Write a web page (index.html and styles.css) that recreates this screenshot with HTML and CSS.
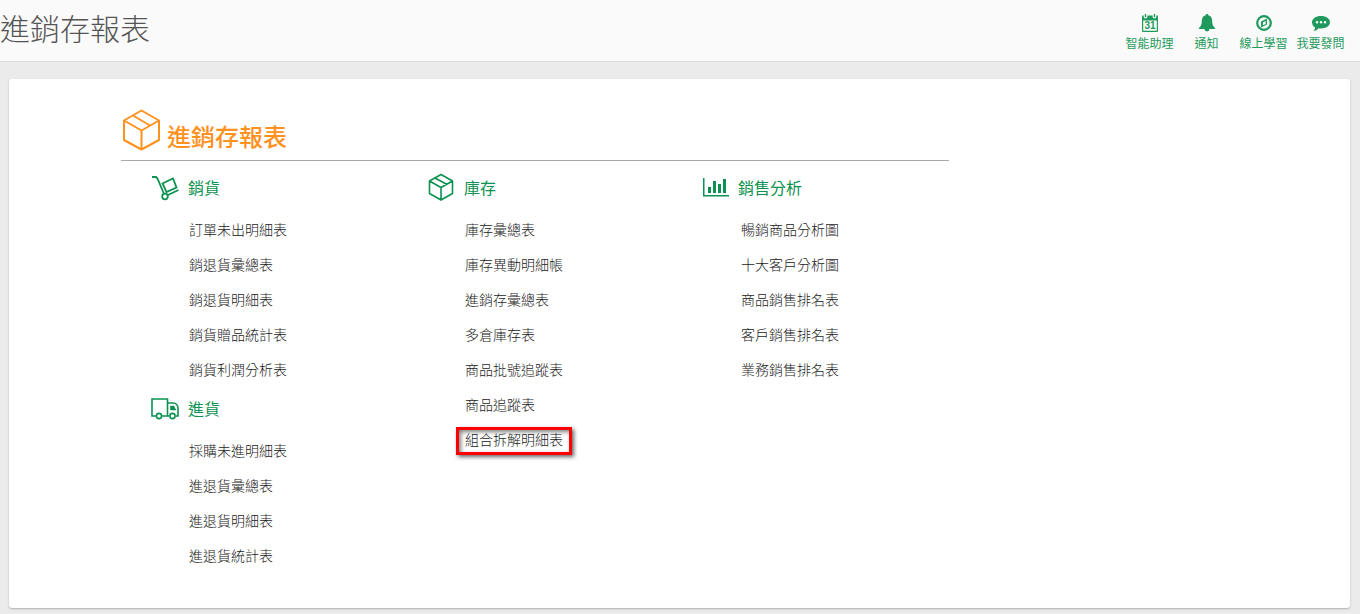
FILE: index.html
```html
<!DOCTYPE html>
<html lang="zh-Hant">
<head>
  <meta charset="UTF-8" />
  <title>進銷存報表</title>
  <meta name="viewport" content="width=device-width, initial-scale=1" />
  <link rel="stylesheet" href="styles.css">
</head>
<body>
  <header class="topbar">
    <h1>進銷存報表</h1>
    <nav class="tools">
      <a href="#">
        <svg width="18" height="20" viewBox="0 0 18 20">
          <path fill="currentColor" fill-rule="evenodd" d="M1 2.500h1.600v1a1.900 1.900 0 0 0 3.800 0v-1h5.200v1a1.900 1.900 0 0 0 3.800 0v-1H17v15.500a1 1 0 0 1-1 1H2a1 1 0 0 1-1-1zM2.200 7.500v10.300h13.600V7.500z"/>
          <path fill="currentColor" d="M3.800 1h1.400v3.200H3.800zM12.800 1h1.400v3.200h-1.400z"/>
          <text class="cal-day" x="9" y="16.300" text-anchor="middle">31</text>
        </svg>
        <span>智能助理</span>
      </a>
      <a href="#">
        <svg width="18" height="20" viewBox="0 0 18 20">
          <path fill="currentColor" d="M9 1c.8 0 1.300.5 1.300 1.200C13 3 14.200 5 14.200 8c0 3.600.9 5.400 3 7.200V16H.8v-.8c2.100-1.800 3-3.600 3-7.200 0-3 1.200-5 3.900-5.800C7.700 1.500 8.200 1 9 1zM6.500 16h5a2.500 2.500 0 0 1-5 0z"/>
        </svg>
        <span>通知</span>
      </a>
      <a href="#">
        <svg width="18" height="20" viewBox="0 0 18 20">
          <circle cx="9" cy="10" r="6.800" fill="none" stroke="currentColor" stroke-width="2.200"/>
          <path fill="currentColor" fill-rule="evenodd" d="M12 5.500v6L6 14.500v-6zM10.700 7.900 8 9.300v3l2.700-1.400z"/>
        </svg>
        <span>線上學習</span>
      </a>
      <a href="#">
        <svg width="18" height="20" viewBox="0 0 18 20">
          <path fill="currentColor" fill-rule="evenodd" d="M9 3c5 0 9 2.700 9 6.200s-4 6.200-9 6.200c-.8 0-1.500 0-2.200-.2C5.300 16.700 3.500 17.800 1.500 18c1-1 1.600-2.200 1.600-3.500C1.200 13.300 0 11.400 0 9.200 0 5.700 4 3 9 3zM5 8a1.300 1.300 0 1 0 0 2.600A1.300 1.300 0 0 0 5 8zm4 0a1.300 1.300 0 1 0 0 2.600A1.300 1.300 0 0 0 9 8zm4 0a1.300 1.300 0 1 0 0 2.600A1.300 1.300 0 0 0 13 8z"/>
        </svg>
        <span>我要發問</span>
      </a>
    </nav>
  </header>

  <main class="panel">
    <div class="reports">
      <div class="reports-title">
        <svg width="40" height="44" viewBox="0 0 40 44" fill="none" stroke="currentColor" stroke-width="2" stroke-linejoin="round">
          <path d="M20.500 1.500 38 11.500v19.500L20.500 40.500 3 31V11.500zM3 11.500l17.500 10 17.500-10M20.500 21.500v19M12 6.500l17 10"/>
        </svg>
        <h2>進銷存報表</h2>
      </div>

      <div class="columns">
        <div class="column">
          <section>
            <h3>
              <svg width="28" height="28" viewBox="0 0 28 28" fill="none" stroke="currentColor" stroke-width="1.800">
                <path d="M1 4h4l1.500 1.500L13 21M17 22l10.500-5M11.500 10.500l10.500-5 3.500 9-10 4.500z"/>
                <circle cx="14" cy="23.500" r="2.800"/>
              </svg>
              銷貨
            </h3>
            <ul>
              <li><a href="#">訂單未出明細表</a></li>
              <li><a href="#">銷退貨彙總表</a></li>
              <li><a href="#">銷退貨明細表</a></li>
              <li><a href="#">銷貨贈品統計表</a></li>
              <li><a href="#">銷貨利潤分析表</a></li>
            </ul>
          </section>
          <section>
            <h3>
              <svg width="28" height="28" viewBox="0 0 28 28" fill="none" stroke="currentColor" stroke-width="1.600">
                <path d="M5 22H1V5h15.500v17H11M16.500 9H22c3 0 5 2.500 5 5.500V22h-2M16.500 22H18"/>
                <circle cx="8" cy="22" r="2.600"/>
                <circle cx="21.500" cy="22" r="2.600"/>
                <path fill="currentColor" d="M20 12.500h2.500l1.500 3h-4z"/>
              </svg>
              進貨
            </h3>
            <ul>
              <li><a href="#">採購未進明細表</a></li>
              <li><a href="#">進退貨彙總表</a></li>
              <li><a href="#">進退貨明細表</a></li>
              <li><a href="#">進退貨統計表</a></li>
            </ul>
          </section>
        </div>

        <div class="column">
          <section>
            <h3>
              <svg width="28" height="28" viewBox="0 0 28 28" fill="none" stroke="currentColor" stroke-width="1.600" stroke-linejoin="round">
                <path d="M14 1.500 25.500 8v12.500L14 27 2.500 20.500V8zM2.500 8 14 14.500 25.500 8M14 14.500V27M8 5l12 6.500"/>
              </svg>
              庫存
            </h3>
            <ul>
              <li><a href="#">庫存彙總表</a></li>
              <li><a href="#">庫存異動明細帳</a></li>
              <li><a href="#">進銷存彙總表</a></li>
              <li><a href="#">多倉庫存表</a></li>
              <li><a href="#">商品批號追蹤表</a></li>
              <li><a href="#">商品追蹤表</a></li>
              <li><a href="#" class="marked">組合拆解明細表</a></li>
            </ul>
          </section>
        </div>

        <div class="column">
          <section>
            <h3>
              <svg width="26" height="28" viewBox="0 0 26 28">
                <path fill="currentColor" d="M0 5h1.500v17H26v1.600H0zM5 14h3v6H5zM10 8h3v12h-3zM15 11h3v9h-3zM20 6h3v14h-3z"/>
              </svg>
              銷售分析
            </h3>
            <ul>
              <li><a href="#">暢銷商品分析圖</a></li>
              <li><a href="#">十大客戶分析圖</a></li>
              <li><a href="#">商品銷售排名表</a></li>
              <li><a href="#">客戶銷售排名表</a></li>
              <li><a href="#">業務銷售排名表</a></li>
            </ul>
          </section>
        </div>
      </div>
    </div>
  </main>
</body>
</html>
```

FILE: styles.css
```css
*, *::before, *::after {
  box-sizing: border-box;
}

body {
  margin: 0;
  min-height: 100vh;
  display: flex;
  flex-direction: column;
  background-color: #ebebeb;
  color: #222;
  font-family: "Noto Sans CJK TC", sans-serif;
}

h1, h2, h3, ul {
  margin: 0;
  padding: 0;
}

a {
  color: inherit;
  text-decoration: none;
}

svg {
  display: block;
  flex-shrink: 0;
}

/* Top bar */
.topbar {
  display: flex;
  justify-content: space-between;
  align-items: flex-start;
  min-height: 62px;
  padding-right: 11px;
  background-color: #fafafa;
  border-bottom: 1px solid #dcdcdc;
}

.topbar h1 {
  font-size: 30px;
  font-weight: 300;
  line-height: 54px;
  color: #555;
}

.tools {
  display: flex;
  padding-top: 13px;
}

.tools a {
  width: 57px;
  display: flex;
  flex-direction: column;
  align-items: center;
  gap: 2px;
  color: #1f9a5c;
  font-size: 12px;
  line-height: 16px;
  white-space: nowrap;
}

.cal-day {
  fill: currentColor;
  font-family: "Liberation Sans", sans-serif;
  font-size: 10px;
  font-weight: 700;
}

/* White panel */
.panel {
  flex-grow: 1;
  margin: 17px 10px 6px 9px;
  padding: 30px 112px;
  background-color: #fff;
  border-radius: 3px;
  box-shadow: 0 1px 2px rgba(0, 0, 0, 0.25);
}

.reports {
  max-width: 828px;
}

.reports-title {
  display: flex;
  align-items: flex-end;
  gap: 6px;
  padding-bottom: 7px;
  border-bottom: 1px solid #aaa;
  color: #ff921e;
}

.reports-title h2 {
  font-size: 24px;
  font-weight: 500;
  line-height: 34px;
}

/* Report lists */
.columns {
  display: grid;
  grid-template-columns: repeat(3, 1fr);
  padding-top: 5px;
}

.column {
  padding-left: 30px;
}

.column h3 {
  display: flex;
  align-items: center;
  gap: 9px;
  height: 42px;
  margin-bottom: 4px;
  color: #0b9150;
  font-size: 16px;
  font-weight: 400;
}

.column ul {
  padding-left: 38px;
  list-style: none;
}

.column li {
  font-size: 14px;
  font-weight: 300;
  line-height: 35px;
}

/* Red frame round the highlighted report */
.marked {
  position: relative;
}

.marked::after {
  content: "";
  position: absolute;
  inset: -2px -9px -6px;
  border: 3px solid #f00;
  box-shadow: 2px 2px 4px rgba(0, 0, 0, 0.6), inset 2px 2px 4px rgba(0, 0, 0, 0.5);
}
```
